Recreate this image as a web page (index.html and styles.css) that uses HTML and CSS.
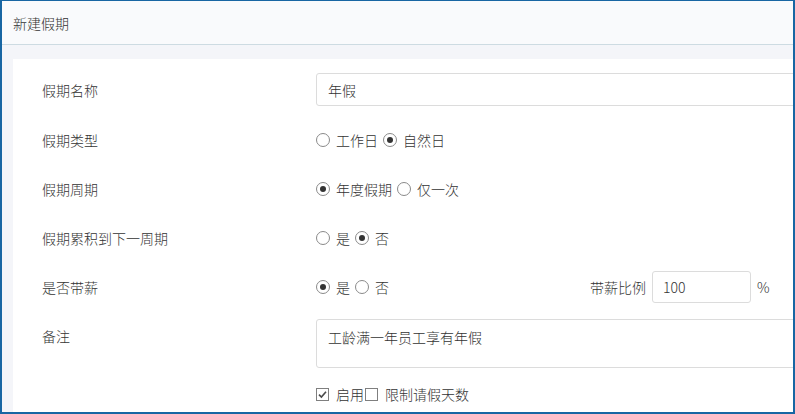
FILE: index.html
```html
<!DOCTYPE html>
<html lang="zh-CN">
<head>
<meta charset="utf-8">
<title>新建假期</title>
<link rel="stylesheet" href="styles.css">
</head>
<body>
<div class="dialog">
  <div class="dialog-header">新建假期</div>
  <div class="dialog-body">
    <div class="panel">
      <div class="row row-first">
        <div class="label">假期名称</div>
        <div class="control">
          <div class="input input-wide">年假</div>
        </div>
      </div>
      <div class="row">
        <div class="label">假期类型</div>
        <div class="control">
          <span class="opt"><span class="radio"></span>工作日</span>
          <span class="opt"><span class="radio checked"></span>自然日</span>
        </div>
      </div>
      <div class="row">
        <div class="label">假期周期</div>
        <div class="control">
          <span class="opt"><span class="radio checked"></span>年度假期</span>
          <span class="opt"><span class="radio"></span>仅一次</span>
        </div>
      </div>
      <div class="row">
        <div class="label">假期累积到下一周期</div>
        <div class="control">
          <span class="opt"><span class="radio"></span>是</span>
          <span class="opt"><span class="radio checked"></span>否</span>
        </div>
      </div>
      <div class="row">
        <div class="label">是否带薪</div>
        <div class="control">
          <div class="radio-group">
            <span class="opt"><span class="radio checked"></span>是</span>
            <span class="opt"><span class="radio"></span>否</span>
          </div>
          <span class="ratio-label">带薪比例</span>
          <div class="input input-small">100</div>
          <span class="percent">%</span>
        </div>
      </div>
      <div class="row row-note">
        <div class="label label-top">备注</div>
        <div class="control control-top">
          <div class="textarea">工龄满一年员工享有年假</div>
        </div>
      </div>
      <div class="row row-check">
        <div class="label"></div>
        <div class="control">
          <span class="copt"><span class="checkbox checked"><svg viewBox="0 0 13 13" width="13" height="13"><path d="M3 6.6 L5.4 9 L10 3.8" fill="none" stroke="#4a4a4a" stroke-width="1.6"/></svg></span>启用</span>
          <span class="copt"><span class="checkbox"></span>限制请假天数</span>
        </div>
      </div>
    </div>
  </div>
</div>
</body>
</html>
```
FILE: styles.css
```css
html, body {
  margin: 0;
  padding: 0;
  background: #ffffff;
}
body {
  font-family: "Noto Sans CJK SC", "Noto Sans", sans-serif;
  font-size: 14px;
  font-weight: 300;
  color: #333333;
}
.dialog {
  width: 795px;
  height: 414px;
  box-sizing: border-box;
  border: 2px solid #1866a3;
  border-top-width: 1px;
  overflow: hidden;
  background: #f4f5f9;
}
.dialog-header {
  height: 44px;
  box-sizing: border-box;
  border-bottom: 1px solid #cddbe2;
  background: #f9fafc;
  padding-left: 11px;
  display: flex;
  align-items: center;
  line-height: 20px;
  color: #333;
}
.dialog-body {
  padding: 14px 0 0 11px;
}
.panel {
  background: #ffffff;
  padding: 14px 0 20px 29px;
  min-height: 360px;
}
.row {
  display: flex;
  align-items: center;
  height: 33px;
  margin-bottom: 16px;
}
.row-first {
  margin-bottom: 17px;
}
.row-note {
  height: 49px;
  align-items: flex-start;
  margin-bottom: 16px;
}
.row-check {
  height: 20px;
}
.label {
  width: 274px;
  flex: 0 0 274px;
  line-height: 20px;
}
.label-top {
  padding-top: 7px;
}
.control {
  display: flex;
  align-items: center;
  width: 520px;
  flex: 0 0 520px;
  line-height: 20px;
}
.input {
  height: 33px;
  box-sizing: border-box;
  border: 1px solid #dcdcdc;
  border-radius: 3px;
  padding-left: 11px;
  display: flex;
  align-items: center;
  color: #333;
}
.input-wide {
  width: 520px;
}
.input-small {
  width: 99px;
  height: 32px;
  padding-left: 10px;
}
.radio-group {
  display: flex;
  align-items: center;
  width: 274px;
  flex: 0 0 274px;
}
.opt {
  display: inline-flex;
  align-items: center;
  margin-right: 5px;
}
.radio {
  width: 14px;
  height: 14px;
  box-sizing: border-box;
  border: 1px solid #8a8a8a;
  border-radius: 50%;
  background: #ffffff;
  margin-right: 6px;
  display: inline-flex;
  align-items: center;
  justify-content: center;
}
.radio.checked::after {
  content: "";
  width: 6px;
  height: 6px;
  border-radius: 50%;
  background: #333333;
}
.ratio-label {
  margin-right: 6px;
}
.percent {
  margin-left: 6px;
}
.textarea {
  width: 520px;
  height: 49px;
  box-sizing: border-box;
  border: 1px solid #dcdcdc;
  border-radius: 3px;
  padding: 7px 11px;
  line-height: 20px;
}
.copt {
  display: inline-flex;
  align-items: center;
  margin-right: 1px;
}
.checkbox {
  width: 13px;
  height: 13px;
  box-sizing: border-box;
  border: 1px solid #7f7f7f;
  background: #ffffff;
  margin-right: 7px;
  display: inline-flex;
  align-items: center;
  justify-content: center;
  position: relative;
}
.checkbox svg {
  position: absolute;
  left: -1px;
  top: -1px;
}
```
